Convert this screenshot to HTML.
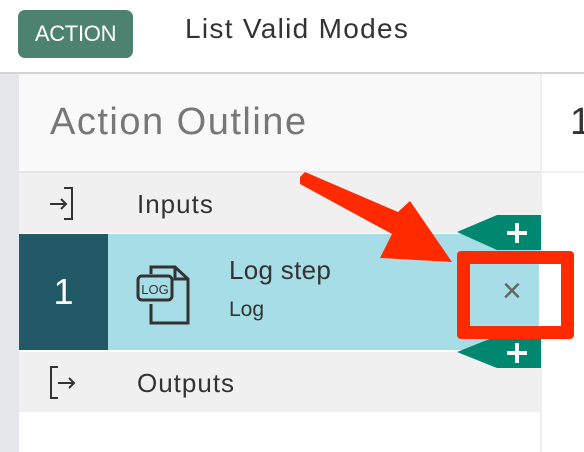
<!DOCTYPE html>
<html><head><style>
*{margin:0;padding:0;box-sizing:border-box}
body{width:584px;height:452px;overflow:hidden;background:#fff;font-family:"Liberation Sans",sans-serif;position:relative}
.a{position:absolute;white-space:nowrap}
</style></head><body>
<div class="a" style="left:18px;top:10px;width:115px;height:48px;background:#4e8270;border-radius:7px;color:#fff;font-size:22px;line-height:48px;text-align:center;letter-spacing:-0.3px">ACTION</div>
<div class="a" style="left:185px;top:13px;font-size:28px;color:#333;letter-spacing:1.3px">List Valid Modes</div>
<div class="a" style="left:0;top:72px;width:584px;height:2px;background:#d4d4d4"></div>
<div class="a" style="left:0;top:74px;width:19px;height:378px;background:#e5e7ea"></div>
<div class="a" style="left:19px;top:74px;width:521px;height:97px;background:#f9f9f9"></div>
<div class="a" style="left:540px;top:74px;width:2px;height:378px;background:#efefef"></div>
<div class="a" style="left:542px;top:171px;width:42px;height:2px;background:#efefef"></div>
<div class="a" style="left:50px;top:101px;font-size:38px;color:#777;letter-spacing:1.5px">Action Outline</div>
<div class="a" style="left:570px;top:101px;font-size:38px;color:#333">1</div>
<div class="a" style="left:19px;top:171px;width:521px;height:2px;background:#e6e6e6"></div>
<div class="a" style="left:19px;top:173px;width:521px;height:60px;background:#f0f0f0"></div>
<svg class="a" style="left:46px;top:186px" width="30" height="36" viewBox="0 0 30 36" fill="none" stroke="#333" stroke-width="2"><path d="M18 2h8v31h-8"/><path d="M4 18h16M15 13l5 5-5 5"/></svg>
<div class="a" style="left:137px;top:189px;font-size:26px;color:#333;letter-spacing:1px">Inputs</div>
<div class="a" style="left:19px;top:234px;width:89px;height:116px;background:#215a66;color:#fff;font-size:36px;line-height:116px;text-align:center">1</div>
<div class="a" style="left:108px;top:234px;width:432px;height:116px;background:#a7dde6"></div>
<svg class="a" style="left:136px;top:264px" width="62" height="62" viewBox="0 0 62 62" fill="none" stroke="#333" stroke-width="3"><path d="M15 10V3h24l13 12v44H15V40"/><path d="M39 3v12h13"/><rect x="2" y="12" width="34" height="24" rx="4"/><text x="19" y="30" font-size="13" fill="#333" stroke="none" text-anchor="middle" font-family="Liberation Sans">LOG</text></svg>
<div class="a" style="left:229px;top:255px;font-size:26px;color:#333;letter-spacing:0.3px">Log step</div>
<div class="a" style="left:229px;top:298px;font-size:21px;color:#333">Log</div>
<div class="a" style="left:19px;top:350px;width:521px;height:2px;background:#fff"></div>
<div class="a" style="left:19px;top:352px;width:521px;height:60px;background:#f0f0f0"></div>
<svg class="a" style="left:46px;top:364px" width="34" height="38" viewBox="0 0 34 38" fill="none" stroke="#333" stroke-width="2"><path d="M12 3H5v31h7"/><path d="M12 19h16M23 14l5 5-5 5"/></svg>
<div class="a" style="left:137px;top:368px;font-size:26px;color:#333;letter-spacing:1px">Outputs</div>
<svg class="a" style="left:455px;top:215px" width="86" height="36"><polygon points="2,17 42,0 86,0 86,35 42,35" fill="#00876f"/><path d="M52 18h20M62 8v20" stroke="#fff" stroke-width="4"/></svg>
<svg class="a" style="left:455px;top:336px" width="86" height="33"><polygon points="2,16 42,0 86,0 86,32 42,32" fill="#00876f"/><path d="M52 17h20M62 7v20" stroke="#fff" stroke-width="4"/></svg>
<div class="a" style="left:539px;top:251px;width:35px;height:88px;background:#fff"></div>
<div class="a" style="left:502px;top:272px;font-size:34px;color:#666">×</div>
<div class="a" style="left:457px;top:251px;width:117px;height:88px;border:13px solid #ff2a00;border-radius:4px"></div>
<svg class="a" style="left:0;top:0" width="584" height="452"><polygon points="300,177 305,172 398,212 410,201 452,262 380,258 392,234 300,184" fill="#ff2a00"/></svg>
</body></html>
